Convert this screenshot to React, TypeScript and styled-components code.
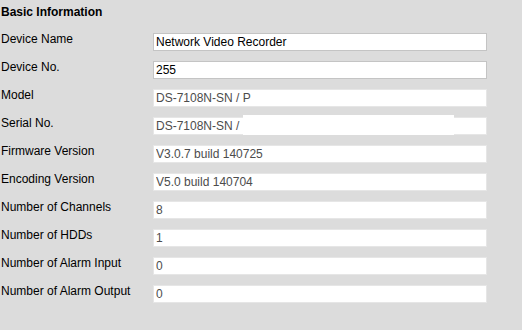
import React from 'react';
import styled, { createGlobalStyle } from 'styled-components';

const GlobalStyle = createGlobalStyle`
  html, body {
    margin: 0;
    padding: 0;
    background: #dcdcdc;
  }
  body {
    font-family: "Liberation Sans", Arial, sans-serif;
    font-size: 12px;
    color: #000;
  }
`;

const Page = styled.div`
  width: 522px;
  height: 330px;
  background: #dcdcdc;
  padding: 4px 0 0 1px;
  box-sizing: border-box;
`;

const Title = styled.div`
  font-weight: 700;
  font-size: 12px;
  line-height: 16px;
  margin-bottom: 11px;
`;

const Form = styled.div`
  display: flex;
  flex-direction: column;
`;

const Row = styled.div`
  display: grid;
  grid-template-columns: 152px 334px;
  align-items: start;
  height: 28px;
`;

const Label = styled.label`
  font-size: 12px;
  line-height: 16px;
  white-space: nowrap;
`;

const FieldWrap = styled.div`
  position: relative;
  margin-top: 2px;
`;

const Field = styled.input<{ $readOnlyLook?: boolean }>`
  display: block;
  width: 334px;
  height: 18px;
  box-sizing: border-box;
  margin: 0;
  padding: 0 2px;
  border: 1px solid ${(p) => (p.$readOnlyLook ? '#e6e6e6' : '#c4c4c4')};
  background: #fff;
  font-family: "Liberation Sans", Arial, sans-serif;
  font-size: 12px;
  line-height: 16px;
  color: ${(p) => (p.$readOnlyLook ? '#4c4c4c' : '#000')};
  outline: none;
  -webkit-text-fill-color: ${(p) => (p.$readOnlyLook ? '#4c4c4c' : '#000')};
  opacity: 1;
`;

const Redaction = styled.div`
  position: absolute;
  left: 90px;
  top: -2px;
  width: 211px;
  height: 20px;
  background: #fff;
`;

type Item = { label: string; value: string; editable?: boolean; redacted?: boolean };

const ITEMS: Item[] = [
  { label: 'Device Name', value: 'Network Video Recorder', editable: true },
  { label: 'Device No.', value: '255', editable: true },
  { label: 'Model', value: 'DS-7108N-SN / P' },
  { label: 'Serial No.', value: 'DS-7108N-SN / ', redacted: true },
  { label: 'Firmware Version', value: 'V3.0.7 build 140725' },
  { label: 'Encoding Version', value: 'V5.0 build 140704' },
  { label: 'Number of Channels', value: '8' },
  { label: 'Number of HDDs', value: '1' },
  { label: 'Number of Alarm Input', value: '0' },
  { label: 'Number of Alarm Output', value: '0' },
];

const App: React.FC = () => {
  return (
    <>
      <GlobalStyle />
      <Page>
        <Title>Basic Information</Title>
        <Form>
          {ITEMS.map((item) => (
            <Row key={item.label}>
              <Label>{item.label}</Label>
              <FieldWrap>
                <Field
                  $readOnlyLook={!item.editable}
                  disabled={!item.editable}
                  defaultValue={item.value}
                />
                {item.redacted && <Redaction />}
              </FieldWrap>
            </Row>
          ))}
        </Form>
      </Page>
    </>
  );
};

export default App;
